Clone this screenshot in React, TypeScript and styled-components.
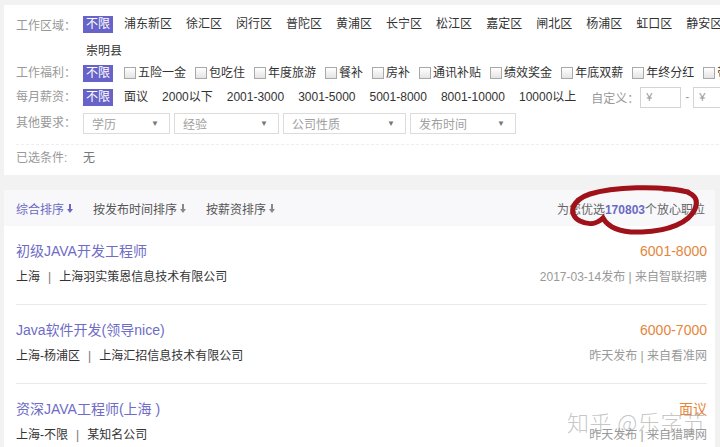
import React from "react";
import styled, { createGlobalStyle } from "styled-components";

const GlobalStyle = createGlobalStyle`
  html, body {
    margin: 0;
    padding: 0;
    background: #f2f2f2;
    overflow: hidden;
  }
  body {
    font-family: "Liberation Sans", "Noto Sans CJK SC", sans-serif;
    font-size: 12px;
    color: #333;
  }
`;

const Page = styled.div`
  position: relative;
  width: 720px;
  height: 447px;
  padding: 5px 0 0 4px;
  box-sizing: border-box;
  overflow: hidden;
`;

const FilterCard = styled.div`
  width: 900px;
  background: #fff;
  padding: 9px 0 4px 12px;
  box-sizing: border-box;
`;

const FilterRow = styled.div`
  display: flex;
  align-items: flex-start;
`;

const Label = styled.div<{ $lh?: number }>`
  flex: 0 0 67px;
  color: #999;
  line-height: ${(p) => p.$lh ?? 24}px;
  white-space: nowrap;
`;

const Options = styled.div<{ $h?: number }>`
  display: flex;
  flex-wrap: wrap;
  align-items: center;
  align-content: space-around;
  column-gap: 8px;
  height: ${(p) => p.$h ?? 24}px;
  flex: 1;
`;

const Break = styled.div`
  flex-basis: 100%;
  height: 0;
`;

const Option = styled.span<{ $active?: boolean }>`
  padding: 0 3px;
  line-height: 17px;
  white-space: nowrap;
  color: ${(p) => (p.$active ? "#fff" : "#333")};
  background: ${(p) => (p.$active ? "#6863c8" : "transparent")};
`;

const CheckOption = styled.span`
  display: inline-flex;
  align-items: center;
  line-height: 17px;
  padding-left: 3px;
  margin-right: -2px;
  white-space: nowrap;
`;

const Box = styled.i`
  width: 10px;
  height: 10px;
  border: 1px solid #a9a9a9;
  background: linear-gradient(#fff, #e4e4e4);
  margin-right: 2px;
`;

const SubLabel = styled.span`
  color: #999;
  margin: 0 -7px 0 4px;
`;

const PriceInput = styled.span`
  width: 41px;
  height: 21px;
  box-sizing: border-box;
  border: 1px solid #d4d4d4;
  color: #999;
  font-size: 11px;
  line-height: 19px;
  padding-left: 5px;
`;

const Dash = styled.span`
  color: #999;
  margin: 0 -4px;
`;

const Selects = styled.div`
  display: flex;
  gap: 4px;
  padding-top: 3px;
`;

const Select = styled.div<{ $w: number }>`
  width: ${(p) => p.$w}px;
  height: 21px;
  box-sizing: border-box;
  border: 1px solid #dcdcdc;
  display: flex;
  align-items: center;
  justify-content: space-between;
  padding: 0 10px 0 8px;
  color: #a0a0a0;
`;

const Caret = styled.span`
  font-size: 8px;
  color: #777;
`;

const Divider = styled.div`
  height: 0;
  border-top: 1px dashed #eeeeee;
  margin: 8px 0 0 0;
`;

const Muted = styled.span`
  color: #777;
  line-height: 26px;
`;

const ListCard = styled.div`
  width: 711px;
  margin-top: 15px;
  background: #fff;
`;

const SortBar = styled.div`
  height: 36px;
  background: #f8f8fb;
  display: flex;
  align-items: center;
  padding: 0 10px 0 12px;
`;

const SortTabs = styled.div`
  display: flex;
  gap: 20px;
  flex: 1;
`;

const SortTab = styled.span<{ $active?: boolean }>`
  display: inline-flex;
  align-items: center;
  gap: 3px;
  color: ${(p) => (p.$active ? "#6b69c4" : "#555")};
  svg {
    color: ${(p) => (p.$active ? "#6b69c4" : "#888")};
  }
`;

const Summary = styled.span`
  color: #666;
  b {
    color: #6b69c4;
    font-weight: bold;
  }
`;

const JobItem = styled.div`
  margin: 0 8px 0 12px;
  height: 79px;
  box-sizing: border-box;
  padding-top: 15px;
  border-bottom: 1px solid #e9e9e9;
  display: grid;
  grid-template-columns: 1fr auto;
  align-content: start;
  row-gap: 7px;
`;

const JobTitle = styled.div`
  font-size: 14px;
  line-height: 20px;
  color: #6e6cc6;
`;

const Salary = styled.div`
  font-size: 14px;
  line-height: 20px;
  color: #e4853d;
  text-align: right;
`;

const JobMeta = styled.div`
  line-height: 18px;
  color: #333;
`;

const Source = styled.div`
  line-height: 18px;
  color: #999;
  text-align: right;
`;

const Sep = styled.span`
  margin: 0 8px;
  color: #777;
`;

const Annotation = styled.svg`
  position: absolute;
  left: 560px;
  top: 180px;
  pointer-events: none;
`;

const Watermark = styled.div`
  position: absolute;
  left: 567px;
  top: 405px;
  font-size: 22px;
  letter-spacing: 0.5px;
  color: rgba(150, 150, 150, 0.55);
  font-family: "Noto Sans CJK SC", sans-serif;
  font-weight: 300;
  white-space: nowrap;
  pointer-events: none;
`;

const SortArrow = () => (
  <svg width="6" height="9" viewBox="0 0 6 9">
    <path d="M2 0h2v5h2L3 9 0 5h2z" fill="currentColor" />
  </svg>
);

const districts = ["浦东新区", "徐汇区", "闵行区", "普陀区", "黄浦区", "长宁区", "松江区", "嘉定区", "闸北区", "杨浦区", "虹口区", "静安区", "宝山区", "金山区"];
const welfare = ["五险一金", "包吃住", "年度旅游", "餐补", "房补", "通讯补贴", "绩效奖金", "年底双薪", "年终分红", "带薪年假"];
const salaries = ["面议", "2000以下", "2001-3000", "3001-5000", "5001-8000", "8001-10000", "10000以上"];
const selects: [string, number][] = [["学历", 87], ["经验", 105], ["公司性质", 123], ["发布时间", 106]];

const jobs = [
  { title: "初级JAVA开发工程师", place: "上海", company: "上海羽实策恩信息技术有限公司", salary: "6001-8000", source: "2017-03-14发布 | 来自智联招聘" },
  { title: "Java软件开发(领导nice)", place: "上海-杨浦区", company: "上海汇招信息技术有限公司", salary: "6000-7000", source: "昨天发布 | 来自看准网" },
  { title: "资深JAVA工程师(上海 )", place: "上海-不限", company: "某知名公司", salary: "面议", source: "昨天发布 | 来自猎聘网" },
];

export default function App() {
  return (
    <>
      <GlobalStyle />
      <Page>
        <FilterCard>
          <FilterRow>
            <Label>工作区域：</Label>
            <Options $h={48}>
              <Option $active>不限</Option>
              {districts.map((d) => (
                <Option key={d}>{d}</Option>
              ))}
              <Break />
              <Option>崇明县</Option>
            </Options>
          </FilterRow>
          <FilterRow>
            <Label $lh={22}>工作福利：</Label>
            <Options $h={22}>
              <Option $active>不限</Option>
              {welfare.map((w) => (
                <CheckOption key={w}>
                  <Box />
                  {w}
                </CheckOption>
              ))}
            </Options>
          </FilterRow>
          <FilterRow>
            <Label $lh={26}>每月薪资：</Label>
            <Options $h={26}>
              <Option $active>不限</Option>
              {salaries.map((s) => (
                <Option key={s}>{s}</Option>
              ))}
              <SubLabel>自定义：</SubLabel>
              <PriceInput>¥</PriceInput>
              <Dash>-</Dash>
              <PriceInput>¥</PriceInput>
            </Options>
          </FilterRow>
          <FilterRow>
            <Label $lh={26}>其他要求：</Label>
            <Selects>
              {selects.map(([s, w]) => (
                <Select key={s} $w={w}>
                  {s}
                  <Caret>▼</Caret>
                </Select>
              ))}
            </Selects>
          </FilterRow>
          <Divider />
          <FilterRow>
            <Label $lh={26}>已选条件:</Label>
            <Muted>无</Muted>
          </FilterRow>
        </FilterCard>

        <ListCard>
          <SortBar>
            <SortTabs>
              <SortTab $active>综合排序 <SortArrow /></SortTab>
              <SortTab>按发布时间排序 <SortArrow /></SortTab>
              <SortTab>按薪资排序 <SortArrow /></SortTab>
            </SortTabs>
            <Summary>
              为您优选<b>170803</b>个放心职位
            </Summary>
          </SortBar>
          {jobs.map((j) => (
            <JobItem key={j.title}>
              <JobTitle>{j.title}</JobTitle>
              <Salary>{j.salary}</Salary>
              <JobMeta>
                {j.place}
                <Sep>|</Sep>
                {j.company}
              </JobMeta>
              <Source>{j.source}</Source>
            </JobItem>
          ))}
        </ListCard>

        <Annotation width="150" height="60" viewBox="560 180 150 60">
          <path
            d="M688 192 C660 185, 612 187, 590 194 C572 200, 567 214, 580 221 C590 226, 598 223, 603 218 C608 227, 620 233, 642 232 C668 231, 689 223, 695 209 C700 197, 692 189, 664 189"
            fill="none"
            stroke="#a0121a"
            strokeWidth="5"
            strokeLinecap="round"
          />
        </Annotation>
        <Watermark>知乎 @乐字节</Watermark>
      </Page>
    </>
  );
}
